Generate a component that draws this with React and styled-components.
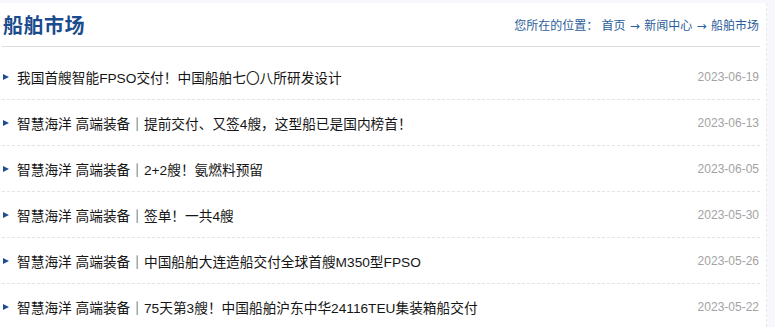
import React from "react";
import styled, { createGlobalStyle } from "styled-components";

const Global = createGlobalStyle`
  html, body { margin: 0; padding: 0; background: #f7f8fb; }
  body { font-family: "Liberation Sans", Arial, "Noto Sans CJK SC", sans-serif; }
`;

const Page = styled.div`
  padding-top: 3px;
  background: #f7f8fb;
  min-height: 327px;
  box-sizing: border-box;
`;

const Panel = styled.div`
  width: 767px;
  box-sizing: border-box;
  background: #fff;
  border-right: 1px dashed #e6e8ec;
  padding: 0 6px 0 2px;
  height: 324px;
  overflow: hidden;
`;

const Header = styled.div`
  display: flex;
  align-items: center;
  justify-content: space-between;
  height: 43px;
  border-bottom: 1px solid #dcdcdc;
  padding-left: 1px;
`;

const Title = styled.h2`
  margin: 0;
  font-size: 20px;
  font-weight: bold;
  color: #1a4b8c;
  letter-spacing: 0.5px;
  font-family: "Liberation Sans", "Noto Sans CJK SC", sans-serif;
`;

const Crumbs = styled.div`
  font-size: 12px;
  color: #2b5d9a;
  font-family: "Liberation Sans", "Noto Sans CJK SC", sans-serif;
  margin-right: 1px;
`;

const Arrow = styled.span`
  font-family: "DejaVu Sans", sans-serif;
  font-size: 12px;
  margin: 0 1px;
`;

const List = styled.ul`
  list-style: none;
  margin: 7px 0 0;
  padding: 0;
`;

const Row = styled.li`
  display: flex;
  align-items: center;
  justify-content: space-between;
  height: 44px;
  border-bottom: 1px dashed #e3e3e3;
  padding-top: 1px;
`;

const Link = styled.a`
  display: flex;
  align-items: center;
  font-size: 13.7px;
  color: #151515;
  text-decoration: none;
  font-family: "Liberation Sans", "Noto Sans CJK SC", sans-serif;
`;

const Bullet = styled.span`
  width: 0;
  height: 0;
  border-left: 6px solid #1d4f8e;
  border-top: 3.5px solid transparent;
  border-bottom: 3.5px solid transparent;
  margin: 0 8px 0 1px;
`;

const DateText = styled.span`
  font-size: 12px;
  color: #a3a3a3;
  margin-right: 1px;
`;

const items = [
  ["我国首艘智能FPSO交付！中国船舶七〇八所研发设计", "2023-06-19"],
  ["智慧海洋 高端装备｜提前交付、又签4艘，这型船已是国内榜首！", "2023-06-13"],
  ["智慧海洋 高端装备｜2+2艘！氨燃料预留", "2023-06-05"],
  ["智慧海洋 高端装备｜签单！一共4艘", "2023-05-30"],
  ["智慧海洋 高端装备｜中国船舶大连造船交付全球首艘M350型FPSO", "2023-05-26"],
  ["智慧海洋 高端装备｜75天第3艘！中国船舶沪东中华24116TEU集装箱船交付", "2023-05-22"],
];

export default function App() {
  return (
    <Page>
      <Global />
      <Panel>
        <Header>
          <Title>船舶市场</Title>
          <Crumbs>
            您所在的位置： 首页 <Arrow>→</Arrow> 新闻中心 <Arrow>→</Arrow> 船舶市场
          </Crumbs>
        </Header>
        <List>
          {items.map(([t, d]) => (
            <Row key={t}>
              <Link href="#">
                <Bullet />
                {t}
              </Link>
              <DateText>{d}</DateText>
            </Row>
          ))}
        </List>
      </Panel>
    </Page>
  );
}
